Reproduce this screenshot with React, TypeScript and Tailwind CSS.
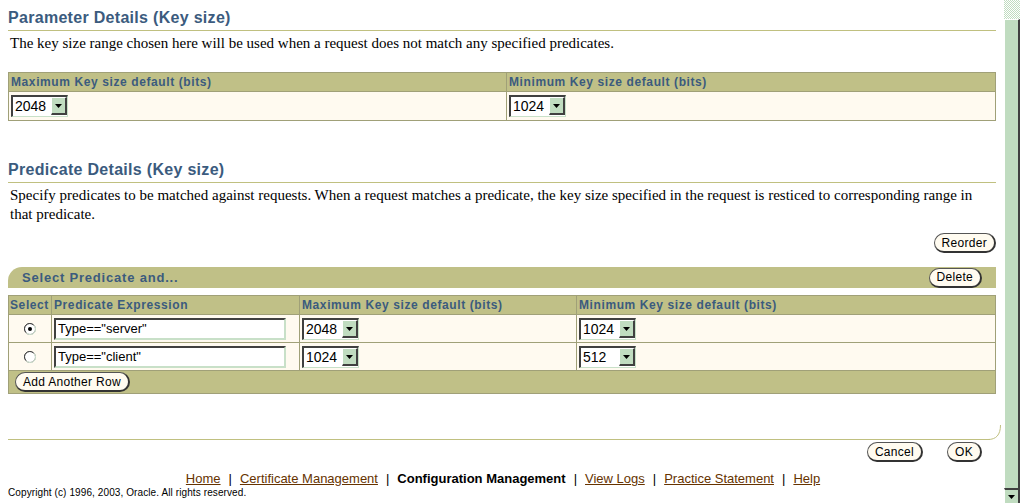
import React from "react";

const sans = { fontFamily: '"Liberation Sans", Arial, sans-serif' };
const serif = { fontFamily: '"Liberation Serif", "Times New Roman", serif' };

function Select({ value, width = 57 }: { value: string; width?: number }) {
  return (
    <div
      className="flex h-[22px] border-t-2 border-l-2 border-t-[#404040] border-l-[#404040] border-b border-r border-b-[#c8e0c8] border-r-[#c8e0c8] bg-white"
      style={{ width }}
    >
      <div className="flex-1 pl-[2px] text-[14px] leading-[18px] text-black" style={sans}>
        {value}
      </div>
      <div className="w-[16px] h-[18px] bg-[#c0dcc0] border-t border-l border-t-white border-l-white border-b-2 border-r-2 border-b-[#404040] border-r-[#404040] flex items-center justify-center">
        <svg width="7" height="4" viewBox="0 0 7 4">
          <path d="M0 0h7L3.5 4z" fill="#000" />
        </svg>
      </div>
    </div>
  );
}

function Btn({ label }: { label: string }) {
  return (
    <div
      className="inline-flex h-[20px] items-center rounded-full border border-[#555] border-r-2 border-b-2 border-r-[#333] border-b-[#333] bg-[#fffbf0] px-[7px] text-[12px] tracking-[0.3px] text-black"
      style={sans}
    >
      {label}
    </div>
  );
}

function TextIn({ value }: { value: string }) {
  return (
    <div
      className="h-[22px] w-[232px] border-t-2 border-l-2 border-t-[#404040] border-l-[#404040] border-b-2 border-r-2 border-b-[#c8e0c8] border-r-[#c8e0c8] bg-white pl-[2px] text-[13px] leading-[18px] text-black"
      style={sans}
    >
      {value}
    </div>
  );
}

function Radio({ on }: { on: boolean }) {
  return (
    <svg width="12" height="12" viewBox="0 0 12 12">
      <circle cx="6" cy="6" r="5.5" fill="#fff" stroke="#808080" />
      <path d="M2 9.5A5 5 0 0 1 9.5 2" stroke="#404040" fill="none" />
      <path d="M10 2.5A5 5 0 0 1 2.5 10" stroke="#d4e8d4" fill="none" />
      {on && <circle cx="6" cy="6" r="2" fill="#000" />}
    </svg>
  );
}

const title = "text-[16px] font-bold leading-[20px] tracking-[0.3px] text-[#3b5b7e]";
const th = "text-[12px] font-bold text-[#3b5b7e] tracking-[0.6px]";

export default function App() {
  return (
    <div className="flex h-[503px] w-[1024px] overflow-hidden bg-white">
      <div className="flex-1 pl-[8px] pr-[8px]">
        {/* Parameter details */}
        <div className="pt-[8px]">
          <div className="border-b border-[#c0c080] pb-[2px]">
            <div className={title} style={sans}>Parameter Details (Key size)</div>
          </div>
          <div className="mt-[3px] pl-[2px] text-[15px] leading-[19px] text-black" style={serif}>
            The key size range chosen here will be used when a request does not match any specified predicates.
          </div>
          <div className="mt-[19px] border border-[#a0a078]">
            <div className="flex h-[19px] bg-[#c0c087] border-b border-[#a0a078]">
              <div className={`w-[498px] border-r border-[#a0a078] pl-[2px] leading-[19px] ${th}`} style={sans}>
                Maximum Key size default (bits)
              </div>
              <div className={`flex-1 pl-[2px] leading-[19px] ${th}`} style={sans}>
                Minimum Key size default (bits)
              </div>
            </div>
            <div className="flex h-[28px] bg-[#fffaf0]">
              <div className="w-[498px] border-r border-[#a0a078] pl-[2px] pt-[3px]">
                <Select value="2048" />
              </div>
              <div className="flex-1 pl-[2px] pt-[3px]">
                <Select value="1024" />
              </div>
            </div>
          </div>
        </div>

        {/* Predicate details */}
        <div className="mt-[39px]">
          <div className="border-b border-[#c0c080] pb-[2px]">
            <div className={title} style={sans}>Predicate Details (Key size)</div>
          </div>
          <div className="mt-[3px] pl-[2px] pr-[6px] text-[15px] leading-[19px] text-black" style={serif}>
            Specify predicates to be matched against requests. When a request matches a predicate, the key size specified in the request is resticed to corresponding range in that predicate.
          </div>
          <div className="mt-[9px] flex justify-end">
            <Btn label="Reorder" />
          </div>
          <div className="mt-[14px] flex h-[21px] items-center justify-between rounded-tl-[14px] bg-[#c0c087] pl-[14px] pr-[14px]">
            <div className="text-[13px] font-bold text-[#3b5b7e] tracking-[0.8px]" style={sans}>
              Select Predicate and...
            </div>
            <Btn label="Delete" />
          </div>
          <div className="mt-[7px] border border-[#a0a078]">
            <div className="flex h-[19px] bg-[#c0c087] border-b border-[#a0a078]">
              <div className={`w-[43px] border-r border-[#a0a078] pl-[1px] leading-[19px] ${th} tracking-[0.2px]`} style={sans}>
                Select
              </div>
              <div className={`w-[248px] border-r border-[#a0a078] pl-[2px] leading-[19px] ${th}`} style={sans}>
                Predicate Expression
              </div>
              <div className={`w-[277px] border-r border-[#a0a078] pl-[2px] leading-[19px] ${th}`} style={sans}>
                Maximum Key size default (bits)
              </div>
              <div className={`flex-1 pl-[2px] leading-[19px] ${th}`} style={sans}>
                Minimum Key size default (bits)
              </div>
            </div>
            {[
              { on: true, expr: 'Type=="server"', max: "2048", min: "1024" },
              { on: false, expr: 'Type=="client"', max: "1024", min: "512" },
            ].map((r, i) => (
              <div key={i} className="flex h-[28px] bg-[#fffaf0] border-b border-[#a0a078]">
                <div className="w-[43px] border-r border-[#a0a078] flex items-center justify-center pt-[1px]">
                  <Radio on={r.on} />
                </div>
                <div className="w-[248px] border-r border-[#a0a078] pl-[2px] pt-[3px]">
                  <TextIn value={r.expr} />
                </div>
                <div className="w-[277px] border-r border-[#a0a078] pl-[2px] pt-[3px]">
                  <Select value={r.max} />
                </div>
                <div className="flex-1 pl-[2px] pt-[3px]">
                  <Select value={r.min} />
                </div>
              </div>
            ))}
            <div className="flex h-[22px] items-center bg-[#c0c087] pl-[6px]">
              <Btn label="Add Another Row" />
            </div>
          </div>
        </div>

        {/* Bottom */}
        <div className="relative mt-[45px] h-[1px] w-[982px] bg-[#c0c080]">
          <svg className="absolute right-[-12px] bottom-0" width="14" height="15" viewBox="0 0 14 15">
            <path d="M0 14.5C8 14.5 12.5 10 12.5 0" stroke="#c0c080" fill="none" />
          </svg>
        </div>
        <div className="mt-[2px] flex justify-end gap-[24px] pr-[14px]">
          <Btn label="Cancel" />
          <Btn label="OK" />
        </div>
        <div className="mt-[9px] flex justify-center pl-[2px] text-[13px] leading-[16px] text-black" style={sans}>
          <a className="text-[#663300] underline">Home</a>
          <span className="px-[8px]">|</span>
          <a className="text-[#663300] underline">Certificate Management</a>
          <span className="px-[8px]">|</span>
          <span className="font-bold">Configuration Management</span>
          <span className="px-[8px]">|</span>
          <a className="text-[#663300] underline">View Logs</a>
          <span className="px-[8px]">|</span>
          <a className="text-[#663300] underline">Practice Statement</a>
          <span className="px-[8px]">|</span>
          <a className="text-[#663300] underline">Help</a>
        </div>
        <div className="text-[10px] leading-[12px] tracking-[0.1px] text-black" style={sans}>
          Copyright (c) 1996, 2003, Oracle. All rights reserved.
        </div>
      </div>

      {/* Scrollbar */}
      <div className="flex h-[503px] w-[20px] flex-col">
        <div
          className="h-[19px] w-[16px]"
          style={{
            backgroundColor: "#c8dcc8",
            backgroundImage:
              "repeating-conic-gradient(#ffffff 0% 25%, #c0dcc0 0% 50%)",
            backgroundSize: "2px 2px",
          }}
        />
        <div className="flex-1 w-[16px] border-t border-l border-white border-r-2 border-r-[#404040] bg-[#c0dcc0]" />
        <div className="h-[15px] w-[16px] border-t-2 border-t-[#404040] border-l border-l-white border-r-2 border-r-[#404040] bg-[#c0dcc0] flex items-center justify-center">
          <svg width="7" height="4" viewBox="0 0 7 4">
            <path d="M0 0h7L3.5 4z" fill="#000" />
          </svg>
        </div>
      </div>
    </div>
  );
}
